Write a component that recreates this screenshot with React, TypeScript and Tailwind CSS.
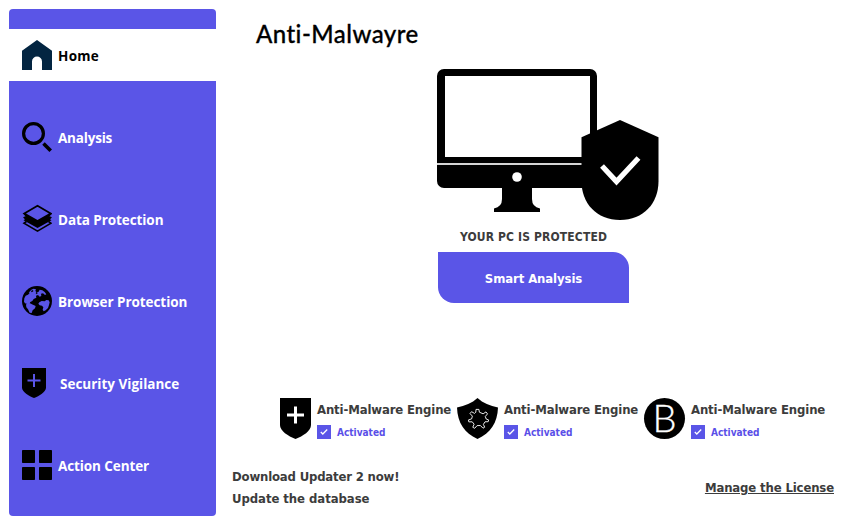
import type { ReactNode } from "react";

const tahoma = "font-['DejaVu_Sans_Condensed','DejaVu_Sans',sans-serif] font-bold text-[#3c3c3c]";

function HomeIcon() {
  return (
    <svg width="30" height="30" viewBox="0 0 30 30" fill="#032541">
      <path d="M0 10.700 15 0l15 10.700V30H20v-8.500a5 5 0 0 0-10 0V30H0z" />
    </svg>
  );
}

function SearchIcon() {
  return (
    <svg width="30" height="30" viewBox="0 0 30 30" fill="none" stroke="#000">
      <circle cx="11.500" cy="11.500" r="9.900" strokeWidth="3.200" />
      <path d="m21.500 21.500 7.200 7.200" strokeWidth="3.600" />
    </svg>
  );
}

function LayersIcon() {
  return (
    <svg width="30" height="30" viewBox="0 0 30 30">
      <path d="m4.500 17.500-2.500 1.700 13.500 7.900L29 19.200l-2.500-1.700" fill="none" stroke="#000" strokeWidth="1.600" />
      <path d="m1 9.600 3.500 0 11 6.600 11-6.600H30l-2 2.200 2 1.800-2 1.600 1.500 1-14 7.800-14-7.800 1.500-1-2-1.600 2-1.800z" />
      <path d="m2.300 9.600 13.200-7.800 13.200 7.800-13.200 7.400z" fill="#5a55e7" stroke="#000" strokeWidth="1.800" />
      <path d="m1 12.300 3 .1-3 .9zM30 12.300l-3 .1 3 .9z" fill="#5a55e7" />
    </svg>
  );
}

function EarthIcon() {
  return (
    <svg width="30" height="30" viewBox="0 0 90 90">
      <circle cx="45" cy="45" r="45" />
      <path
        fill="#5a55e7"
        d="m22 18 6-7 7-3 7 2-2 5 4 4 6-2 3-6 8 2 7 5 5 7-4 2-6-5-6 1 1 7-5 2-5-5-6 2 1 6-8 4-4 6-6 3-3 5 5 3 1 4-6-1-6-5-7-2-3-5 1-10 4-8 7-3 5-5-3-3zM16 51l8 1 9 4 8 4-2 7-7 6-3 8-6-1-5-10-5-6-1-8zM52 49l7-4 9 1 5-4 7 1 3 6-2 8-3 9-7 7-6 3-3-5 2-7-4-5-7-1-4-5z"
      />
      <path d="m27 15 6-3 1 4-5 3zM43 18l4 2-2 5-4-3z" />
    </svg>
  );
}

function BadgeIcon() {
  return (
    <svg className="mr-[6px]" width="24" height="30" viewBox="0 0 24 30">
      <path d="M0 0h24v19.500c0 4.500-7 8.500-12 10.500C7 28 0 24 0 19.500z" />
      <path d="M12 6v13M5.500 12.500h13" stroke="#5a55e7" strokeWidth="2" />
    </svg>
  );
}

function GridIcon() {
  return (
    <svg width="30" height="30" viewBox="0 0 30 30">
      <rect width="13" height="13" rx=".7" />
      <rect x="17" width="13" height="13" rx=".7" />
      <rect y="17" width="13" height="13" rx=".7" />
      <rect x="17" y="17" width="13" height="13" rx=".7" />
    </svg>
  );
}

function NavItem({ icon, label, active, spacing }: { icon: ReactNode; label: string; active?: boolean; spacing: string }) {
  return (
    <a
      className={`flex h-[52px] items-center gap-1.5 pl-[13px] whitespace-nowrap font-['Open_Sans','Noto_Sans',sans-serif] text-[13.500px] font-bold ${
        active ? "bg-white text-black" : "text-white"
      }`}
    >
      {icon}
      <span className={`pt-0.5 ${spacing}`}>{label}</span>
    </a>
  );
}

function ProtectedComputer() {
  return (
    <svg width="222" height="152" viewBox="0 0 222 152">
      <path
        fillRule="evenodd"
        d="M7 0h146a7 7 0 0 1 7 7v87H0V7a7 7 0 0 1 7-7zm1 7v81h145V7z"
      />
      <path d="M0 94h160v2H0z" fill="#d5d5d5" />
      <path d="M0 96h160v16a7 7 0 0 1-7 7H95v11q0 8 8 9.500v3.500H57v-3.500q8-1.500 8-9.500v-11H7a7 7 0 0 1-7-7z" />
      <circle cx="80" cy="108" r="4.800" fill="#fff" />
      <path d="m183 51 38.500 17.300v44c0 22-15 38.700-38.500 38.700s-38.500-16.700-38.500-38.700v-44z" />
      <path d="m165 97 14.500 15.500L201.500 89" fill="none" stroke="#fff" strokeWidth="5.300" />
    </svg>
  );
}

function PlusShield() {
  return (
    <svg width="31" height="41" viewBox="0 0 31 41">
      <path d="M0 0h31v27c0 6-8 11-15.500 14C8 38 0 33 0 27z" />
      <path d="M15.500 8.500v17M7 17h17" stroke="#fff" strokeWidth="3" />
    </svg>
  );
}

function GearShield() {
  return (
    <svg width="41" height="41" viewBox="0 0 41 41">
      <path d="M20.500 0C26 5 33 8 41 9.500 40.500 25 33.500 35 20.500 41 7.500 35 .5 25 0 9.500 8 8 15 5 20.500 0z" />
      <path
        d="m18.800 14.200.2-2.800h2.900l.5 2.800 3.700 1.600 2.900-1.900 1.500 2-2.200 2.600.9 2.500 2.400.9-.4 1.800-3.200.1-1.600 2.600 1.300 2.800-1.700 1-2.600-2.700-3.300.1-2.400 2.700-1.900-1 1.300-3.100-1.900-2.400-3.400.1-.3-2 3.100-1 .8-2.800-2.400-2.500 1.500-1.900 3.100 1.700z"
        fill="none"
        stroke="#fff"
        strokeWidth=".9"
      />
    </svg>
  );
}

function LetterBadge() {
  return (
    <span className="flex size-[41px] items-center justify-center rounded-full bg-black pb-[3px] text-[38px] leading-[38px] font-light text-white font-['Lato',sans-serif] [-webkit-text-stroke:0.300px_#fff]">
      B
    </span>
  );
}

function Engine({ icon }: { icon: ReactNode }) {
  return (
    <div className="flex gap-1.5">
      {icon}
      <div className={`w-[134px] ${tahoma}`}>
        <div className="mt-[3px] h-[18px] text-[13px] leading-[18px] tracking-[-0.140px] whitespace-nowrap">Anti-Malware Engine</div>
        <div className="mt-[6px] flex h-[14px] items-center gap-1.5">
          <span className="flex size-[14px] items-center justify-center bg-[#5a55e7]">
            <svg width="8" height="8" viewBox="0 0 8 8" fill="none" stroke="#fff" strokeWidth="1.300">
              <path d="m.8 4 2 2L7.200 1.500" />
            </svg>
          </span>
          <span className="pt-0.5 text-[10px] leading-[14px] text-[#5a4fe8]">Activated</span>
        </div>
      </div>
    </div>
  );
}

export default function App() {
  return (
    <div className="flex h-[525px] w-[853px] overflow-hidden bg-white pt-[9px] pl-[9px]">
      <nav className="flex h-[507px] w-[207px] shrink-0 flex-col gap-[30px] rounded-[4px] bg-[#5a55e7] pt-5">
        <NavItem icon={<HomeIcon />} label="Home" active spacing="tracking-[0.300px]" />
        <NavItem icon={<SearchIcon />} label="Analysis" spacing="tracking-[-0.200px]" />
        <NavItem icon={<LayersIcon />} label="Data Protection" spacing="tracking-[-0.080px]" />
        <NavItem icon={<EarthIcon />} label="Browser Protection" spacing="tracking-[-0.060px]" />
        <NavItem icon={<BadgeIcon />} label="Security Vigilance" spacing="tracking-normal pl-0.5" />
        <NavItem icon={<GridIcon />} label="Action Center" spacing="tracking-[-0.100px]" />
      </nav>
      <main className="flex grow flex-col pl-4">
        <h1 className="mt-[8px] ml-6 h-[35px] text-[24px] leading-[34px] font-medium tracking-[0.450px] text-black font-['Lato',sans-serif] [font-variant-ligatures:none] [-webkit-text-stroke:0.300px_#000]">
          Anti-Malwayre
        </h1>
        <div className="mt-[17px] ml-[205px] w-[222px]">
          <ProtectedComputer />
        </div>
        <p className={`mt-[7px] ml-[206px] w-[191px] text-center text-[12px] leading-[18px] tracking-[0.140px] whitespace-nowrap ${tahoma}`}>
          YOUR PC IS PROTECTED
        </p>
        <button className="mt-[6px] ml-[206px] h-[51px] w-[191px] rounded-tr-[16px] rounded-bl-[16px] bg-[#5a55e7] pt-[2px] font-['DejaVu_Sans_Condensed','DejaVu_Sans',sans-serif] text-[13px] font-bold tracking-[-0.100px] text-white">
          Smart Analysis
        </button>
        <section className="mt-[95px] ml-12 flex gap-1.5">
          <Engine icon={<PlusShield />} />
          <Engine icon={<GearShield />} />
          <Engine icon={<LetterBadge />} />
        </section>
        <footer className={`mt-[27px] flex justify-between pr-[19px] text-[13px] leading-[22px] ${tahoma}`}>
          <div>
            <p className="tracking-[-0.180px]">Download Updater 2 now!</p>
            <p className="tracking-[-0.060px]">Update the database</p>
          </div>
          <a className="mt-[11px] tracking-[-0.140px] underline">Manage the License</a>
        </footer>
      </main>
    </div>
  );
}
